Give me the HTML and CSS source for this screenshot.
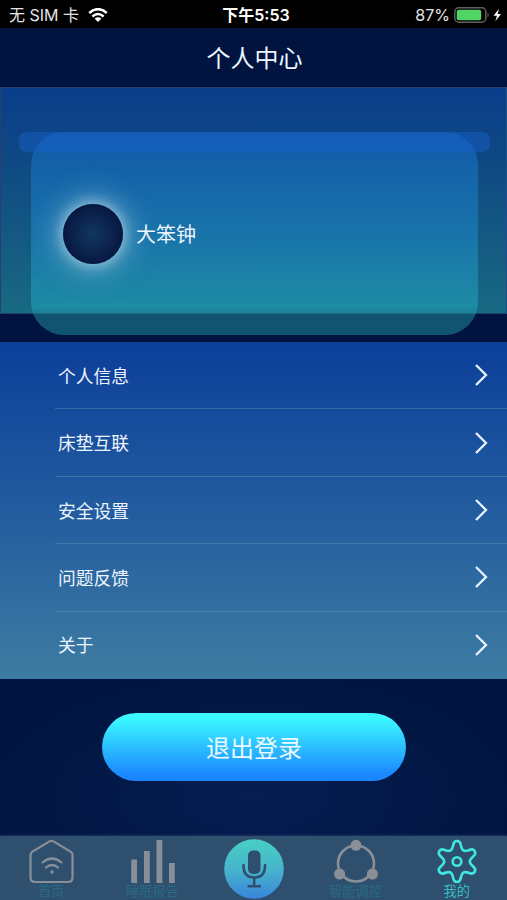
FILE: index.html
```html
<!DOCTYPE html>
<html lang="zh-CN">
<head>
<meta charset="utf-8">
<title>个人中心</title>
<link rel="stylesheet" href="styles.css">
</head>
<body>
<div class="status">
  <div class="carrier"><span>无 SIM 卡</span>
    <svg width="20" height="14" viewBox="0 0 20 14" fill="none" stroke="#fff" stroke-width="2.5"><path d="M1.2 5Q10-2.7 18.8 5M4.4 8.5Q10 3.6 15.6 8.5"/><path d="M6.6 10.5Q10 7.8 13.4 10.5L10 14Z" fill="#fff" stroke="none"/></svg>
  </div>
  <div class="time">下午5:53</div>
  <div class="power"><span>87%</span>
    <svg width="48" height="16" viewBox="0 0 48 16"><rect x=".8" y=".8" width="31" height="14.4" rx="4" fill="#000" stroke="#625f5e" stroke-width="1.5"/><rect x="2.7" y="2.7" width="24.5" height="10.6" rx="2" fill="#50d565"/><path d="M33.5 5.5Q36 8 33.5 10.5Z" fill="#625f5e"/><path d="M45 1.8L39.6 8.7H43L41.3 14.2L47 7H43.6Z" fill="#fff"/></svg>
  </div>
</div>
<header class="title">个人中心</header>
<section class="hero">
  <div class="card"><div class="avatar"></div><span class="name">大笨钟</span></div>
  <div class="strip"></div>
</section>
<nav class="menu">
  <a class="row"><span>个人信息</span><svg class="chev" viewBox="0 0 14 24"><path d="M2 2L12 12L2 22"/></svg></a>
  <a class="row"><span>床垫互联</span><svg class="chev" viewBox="0 0 14 24"><path d="M2 2L12 12L2 22"/></svg></a>
  <a class="row"><span>安全设置</span><svg class="chev" viewBox="0 0 14 24"><path d="M2 2L12 12L2 22"/></svg></a>
  <a class="row"><span>问题反馈</span><svg class="chev" viewBox="0 0 14 24"><path d="M2 2L12 12L2 22"/></svg></a>
  <a class="row"><span>关于</span><svg class="chev" viewBox="0 0 14 24"><path d="M2 2L12 12L2 22"/></svg></a>
</nav>
<div class="actions"><button class="logout">退出登录</button></div>
<footer class="tabs">
  <div class="tab">
    <svg width="48" height="46" viewBox="0 0 48 46" fill="none" stroke="#898f99" stroke-width="2.2" stroke-linecap="round" stroke-linejoin="round"><path d="M22.500 2.400Q24.500 1.200 26.500 2.400L43.500 12.600Q45.500 13.800 45.500 16V38.500Q45.500 43 41 43H8Q3.500 43 3.500 38.500V16Q3.500 13.800 5.500 12.600Z"/><path d="M15.500 23.500Q25 15.500 34.500 23.500M19 28.500Q25 23.500 31 28.500"/><circle cx="25" cy="33" r="1" fill="#898f99" stroke-width="1.500"/></svg>
    <span>首页</span>
  </div>
  <div class="tab">
    <svg width="48" height="46" viewBox="0 0 48 46" fill="#898f99"><path d="M3.200 20.500H9V44H3.200ZM16 12H21.800V44H16ZM28.500 1H34.300V44H28.500ZM41 24H46.800V44H41Z"/></svg>
    <span>睡眠报告</span>
  </div>
  <div class="tab voice">
    <svg width="62" height="60" viewBox="-1 0 62 60"><defs><linearGradient id="mic" x2="0" y2="1"><stop stop-color="#48cfc3"/><stop offset=".5" stop-color="#47b5cb"/><stop offset="1" stop-color="#3a84dc"/></linearGradient></defs><circle cx="31" cy="30" r="29.800" fill="url(#mic)"/><rect x="25" y="11.500" width="12.500" height="23.500" rx="5" fill="#2e506e"/><path d="M20.500 26V27Q20.500 38.500 31.200 38.500Q42 38.500 42 27V26M31.200 38.500V47M25.500 47.200H37" fill="none" stroke="#2e506e" stroke-width="2.500" stroke-linecap="round"/></svg>
  </div>
  <div class="tab">
    <svg width="48" height="46" viewBox="0 0 48 46" fill="#8a8f98"><circle cx="25" cy="24.500" r="18" fill="none" stroke="#8a8f98" stroke-width="2.600"/><circle cx="25" cy="6.300" r="5.500"/><circle cx="8.600" cy="35" r="5.500"/><circle cx="41.400" cy="35" r="5.500"/></svg>
    <span>智能调控</span>
  </div>
  <div class="tab active">
    <svg width="48" height="46" viewBox="0 0 48 46"><defs><path id="lobe" d="M-3.800-16.500C-3-21.800 3-21.800 3.800-16.500C5-10.500 6.590-9.580 12.390-11.540"/></defs><g transform="translate(25 22.500)" fill="none" stroke="#41e5e2" stroke-width="2.600" stroke-linecap="round"><use href="#lobe"/><use href="#lobe" transform="rotate(60)"/><use href="#lobe" transform="rotate(120)"/><use href="#lobe" transform="rotate(180)"/><use href="#lobe" transform="rotate(240)"/><use href="#lobe" transform="rotate(300)"/><circle r="4.300"/></g></svg>
    <span>我的</span>
  </div>
</footer>
</body>
</html>
```
FILE: styles.css
```css
* { box-sizing: border-box; }
body {
  margin: 0;
  width: 507px;
  height: 900px;
  overflow: hidden;
  display: flex;
  flex-direction: column;
  color: #edf5ff;
  background: #00143f;
  font-family: "Liberation Sans", "Noto Sans CJK SC", sans-serif;
}
svg { display: block; flex: none; }
.status {
  height: 28px;
  flex: none;
  display: grid;
  grid-template-columns: 1fr auto 1fr;
  align-items: center;
  padding: 2px 5px 0 9px;
  background: #000;
  color: #e4e4e4;
  font-family: Inter, "Noto Sans CJK SC", sans-serif;
  font-size: 16px;
  line-height: 24px;
}
.carrier, .power { display: flex; align-items: center; gap: 9px; }
.power { justify-content: flex-end; gap: 4px; }
.time { padding-left: 1px; color: #fff; font-weight: 600; }
.title {
  height: 59px;
  flex: none;
  display: flex;
  align-items: center;
  justify-content: center;
  padding: 0 0 2px 2px;
  font-size: 24px;
}
.hero {
  height: 227px;
  flex: none;
  position: relative;
  padding: 44px 28px 0 30px;
  border: 1px solid #28406c;
  border-right-color: #19518c;
  background: linear-gradient(#0b3e8b, #0e4784 28%, #155d82 75%, #186a83);
}
.strip {
  position: absolute;
  top: 44px;
  left: 18px;
  right: 16px;
  height: 20px;
  border-radius: 7px;
  background: rgba(22, 98, 204, .45);
}
.card {
  height: 203px;
  display: flex;
  align-items: center;
  gap: 13px;
  padding: 0 0 0 32px;
  border-radius: 33px;
  background: linear-gradient(rgba(20, 103, 190, .62), rgba(27, 130, 192, .65) 50%, rgba(33, 155, 180, .68) 86%, rgba(31, 143, 160, .52) 90%);
}
.avatar {
  width: 60px;
  height: 60px;
  border-radius: 50%;
  background: radial-gradient(#113762, #071740 72%);
  box-shadow: 0 0 12px 2px rgba(180, 215, 235, .65), 0 0 26px 9px rgba(150, 195, 220, .5);
}
.name { font-size: 20px; }
.menu {
  flex: none;
  height: 337px;
  margin-top: 28px;
  display: flex;
  flex-direction: column;
  background: linear-gradient(#0c3f9a, #255f9f 55%, #3e7ca2);
}
.row {
  flex: 1;
  margin-left: 55px;
  padding: 0 19px 0 3px;
  display: flex;
  align-items: center;
  justify-content: space-between;
  border-bottom: 1px solid rgba(125, 180, 195, .3);
  font-size: 17.8px;
}
.row span { margin-bottom: 1px; }
.row:last-child { border-bottom-color: transparent; }
.chev {
  width: 14px;
  height: 24px;
  fill: none;
  stroke: #e8f5ff;
  stroke-width: 2.3;
}
.actions {
  flex: 1;
  padding-top: 34px;
  display: flex;
  justify-content: center;
  align-items: flex-start;
  background: radial-gradient(ellipse at 50% 75%, #061d53, #00153f 75%);
}
.logout {
  width: 304px;
  height: 68px;
  margin-left: 1px;
  padding: 0 0 2px;
  border: 0;
  border-radius: 34px;
  background: linear-gradient(#3bf8ff 8%, #1a86ff 92%);
  color: #edf9ff;
  font: inherit;
  font-size: 24px;
}
.tabs {
  flex: none;
  height: 64px;
  display: grid;
  grid-template-columns: repeat(5, 101.4px);
  background: #2e506e;
  box-shadow: 0 -1px 2px #1b3565;
}
.tab {
  display: flex;
  flex-direction: column;
  align-items: center;
  padding-top: 3px;
  color: #286985;
  font-size: 13.3px;
  line-height: 16px;
}
.tab span { margin: -1px 0 0 1px; }
.tab.active { color: #3ab9bf; }
```
